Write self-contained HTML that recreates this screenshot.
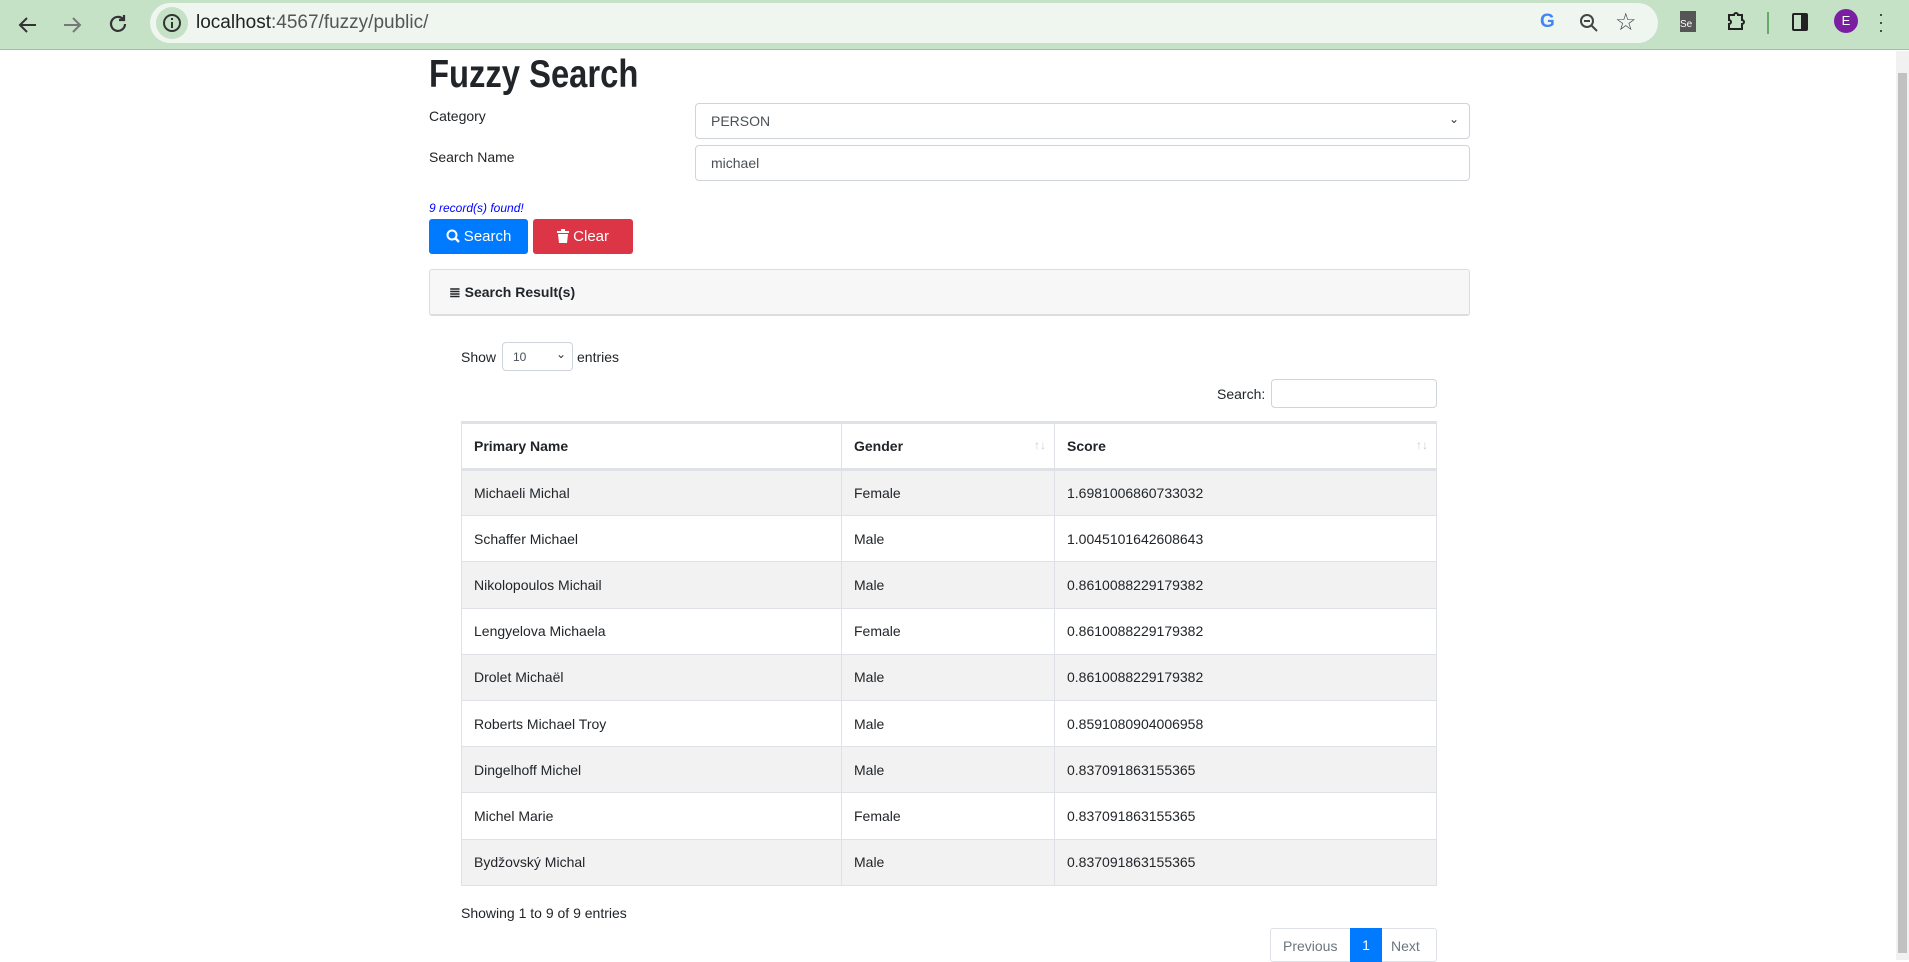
<!DOCTYPE html>
<html><head><meta charset="utf-8"><style>
*{box-sizing:border-box;margin:0;padding:0}
body{width:1909px;height:960px;overflow:hidden;font-family:"Liberation Sans",sans-serif;color:#212529;background:#fff;position:relative;font-size:15px}
.tb{position:absolute;left:0;top:0;width:1909px;height:50px;background:#c5e2c7;border-bottom:1px solid #9fbfa2}
.url{position:absolute;left:150px;top:3px;width:1508px;height:40px;background:#eff6ef;border-radius:20px}
.abs{position:absolute}
.sb{position:absolute;right:0;top:51px;width:13px;height:909px;background:#f1f1f1}
.sb div{position:absolute;left:2px;top:22px;width:9px;height:880px;background:#c1c1c1}
.inp{position:absolute;border:1px solid #ced4da;border-radius:4px;background:#fff}
table{position:absolute;left:461px;top:421px;width:976px;border-collapse:collapse;font-size:14px}
td,th{border:1px solid #dee2e6;height:46.2px;padding:0 12px;text-align:left}
th{border-bottom:3px solid #dee2e6;border-top:3px solid #dee2e6;height:47px;font-weight:bold;position:relative}
tr:nth-child(even) td{background:#f2f2f2}
.arr{position:absolute;right:8px;top:14px;color:#ccc;font-size:12px;font-weight:normal}
</style></head><body>
<div class="tb">
<svg class="abs" style="left:16px;top:13px" width="24" height="24" viewBox="0 0 24 24"><path d="M20 12H5M11 5l-7 7 7 7" stroke="#333" stroke-width="2" fill="none"/></svg>
<svg class="abs" style="left:60px;top:13px" width="24" height="24" viewBox="0 0 24 24"><path d="M4 12h15M13 5l7 7-7 7" stroke="#777" stroke-width="2" fill="none"/></svg>
<svg class="abs" style="left:106px;top:12px" width="24" height="24" viewBox="0 0 24 24"><path d="M19 12a7 7 0 1 1-2-5M18 3v5h-5" stroke="#333" stroke-width="2.2" fill="none"/></svg>
<div class="url">
<div class="abs" style="left:6px;top:4px;width:32px;height:32px;border-radius:16px;background:#c5e2c7"></div>
<svg class="abs" style="left:11px;top:9px" width="22" height="22" viewBox="0 0 22 22"><circle cx="11" cy="11" r="8" stroke="#333" stroke-width="2" fill="none"/><path d="M11 10v6M11 6v2" stroke="#333" stroke-width="2"/></svg>
<div class="abs" style="left:46px;top:9px;font-size:19px;color:#222">localhost<span style="color:#555">:4567/fuzzy/public/</span></div>
<div class="abs" style="left:1390px;top:8px;font-size:19px;font-weight:bold;color:#4285f4">G</div>
<svg class="abs" style="left:1428px;top:9px" width="22" height="22" viewBox="0 0 22 22"><circle cx="9" cy="9" r="6" stroke="#444" stroke-width="2" fill="none"/><path d="M6 9h6M13 13l6 6" stroke="#444" stroke-width="2"/></svg>
<div class="abs" style="left:1465px;top:5px;font-size:24px;color:#444">☆</div>
</div>
<div class="abs" style="left:1680px;top:11px;width:16px;height:21px;background:#555;color:#fff;font-size:10px;padding-top:8px">Se</div>
<svg class="abs" style="left:1725px;top:10px" width="22" height="22" viewBox="0 0 22 22"><path d="M4 5h5a2 2 0 0 1 4 0h4v5a2 2 0 0 1 0 4v5H4v-5a2 2 0 0 0 0-4z" stroke="#222" stroke-width="2" fill="none"/></svg>
<div class="abs" style="left:1767px;top:12px;width:2px;height:22px;background:#6a6"></div>
<div class="abs" style="left:1792px;top:13px;width:16px;height:18px;border:2px solid #222;border-right:7px solid #222;border-radius:2px"></div>
<div class="abs" style="left:1834px;top:9px;width:24px;height:24px;border-radius:12px;background:#7b1fa2;color:#fff;font-size:13px;text-align:center;line-height:24px">E</div>
<div class="abs" style="left:1878px;top:10px;color:#333;font-size:18px;line-height:8px">·<br>·<br>·</div>
</div>
<div class="sb"><div></div></div>

<div class="abs" style="left:429px;top:53px;font-size:39px;font-weight:bold;transform:scaleX(0.84);transform-origin:left">Fuzzy Search</div>
<div class="abs" style="left:429px;top:108px;font-size:14px">Category</div>
<div class="inp" style="left:695px;top:103px;width:775px;height:36px;padding:9px 15px;font-size:14px;color:#495057">PERSON<span style="position:absolute;right:10px;top:8px;font-size:12px;color:#333">⌄</span></div>
<div class="abs" style="left:429px;top:149px;font-size:14px">Search Name</div>
<div class="inp" style="left:695px;top:145px;width:775px;height:36px;padding:9px 15px;font-size:14px;color:#495057">michael</div>
<div class="abs" style="left:429px;top:201px;font-size:12px;font-style:italic;color:#00f">9 record(s) found!</div>
<div class="abs" style="left:429px;top:219px;width:99px;height:35px;background:#007bff;border-radius:3px;color:#fff;text-align:center;line-height:35px;font-size:15px">
<svg width="14" height="14" viewBox="0 0 14 14" style="vertical-align:-2px"><circle cx="6" cy="6" r="4.5" stroke="#fff" stroke-width="2" fill="none"/><path d="M9 9l4 4" stroke="#fff" stroke-width="2.4"/></svg> Search</div>
<div class="abs" style="left:533px;top:219px;width:100px;height:35px;background:#dc3545;border-radius:3px;color:#fff;text-align:center;line-height:35px;font-size:15px">
<svg width="12" height="14" viewBox="0 0 12 14" style="vertical-align:-2px"><path d="M0 2h12v2H0zM4 0h4v2H4zM1 5h10l-1 9H2z" fill="#fff"/></svg> Clear</div>
<div class="abs" style="left:429px;top:269px;width:1041px;height:47px;background:#f7f7f7;border:1px solid #ddd;border-bottom:2px solid #ddd;border-radius:3px;padding:14px 19px;font-weight:bold;font-size:14px">≣ Search Result(s)</div>

<div class="abs" style="left:461px;top:349px;font-size:14px">Show</div>
<div class="inp" style="left:502px;top:342px;width:71px;height:29px;font-size:12px;padding:7px 10px;color:#495057">10<span style="position:absolute;right:6px;top:4px;color:#333">⌄</span></div>
<div class="abs" style="left:577px;top:349px;font-size:14px">entries</div>
<div class="abs" style="left:1217px;top:386px;font-size:14px">Search:</div>
<div class="inp" style="left:1271px;top:379px;width:166px;height:29px"></div>

<table>
<tr><th style="width:380px">Primary Name</th><th style="width:213px">Gender<span class="arr">↑↓</span></th><th>Score<span class="arr">↑↓</span></th></tr>
<tr><td>Michaeli Michal</td><td>Female</td><td>1.6981006860733032</td></tr>
<tr><td>Schaffer Michael</td><td>Male</td><td>1.0045101642608643</td></tr>
<tr><td>Nikolopoulos Michail</td><td>Male</td><td>0.8610088229179382</td></tr>
<tr><td>Lengyelova Michaela</td><td>Female</td><td>0.8610088229179382</td></tr>
<tr><td>Drolet Michaël</td><td>Male</td><td>0.8610088229179382</td></tr>
<tr><td>Roberts Michael Troy</td><td>Male</td><td>0.8591080904006958</td></tr>
<tr><td>Dingelhoff Michel</td><td>Male</td><td>0.837091863155365</td></tr>
<tr><td>Michel Marie</td><td>Female</td><td>0.837091863155365</td></tr>
<tr><td>Bydžovský Michal</td><td>Male</td><td>0.837091863155365</td></tr>
</table>
<div class="abs" style="left:461px;top:905px;font-size:14px">Showing 1 to 9 of 9 entries</div>
<div class="abs" style="left:1270px;top:928px;width:167px;height:34px;border:1px solid #dee2e6;border-radius:3px;font-size:14px;color:#6c757d">
<span class="abs" style="left:12px;top:9px">Previous</span>
<span class="abs" style="left:79px;top:-1px;width:32px;height:34px;background:#007bff;color:#fff;text-align:center;line-height:34px">1</span>
<span class="abs" style="left:120px;top:9px">Next</span></div>
</body></html>
